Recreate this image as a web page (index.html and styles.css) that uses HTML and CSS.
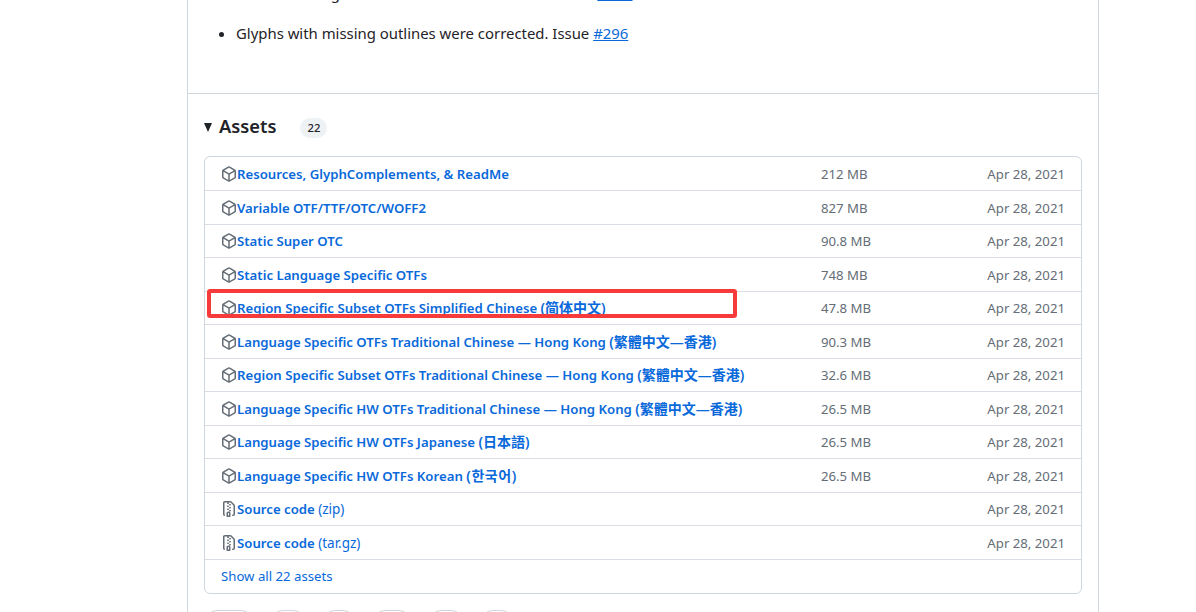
FILE: index.html
```html
<!DOCTYPE html>
<html lang="en">
<head>
<meta charset="utf-8">
<title>Release assets</title>
<link rel="stylesheet" href="styles.css">
</head>
<body>
<svg class="defs" width="0" height="0" aria-hidden="true">
  <symbol id="pkg" viewBox="0 0 16 16"><path d="m8.878.392 5.25 3.045c.54.314.872.89.872 1.514v6.098a1.75 1.75 0 0 1-.872 1.514l-5.25 3.045a1.75 1.75 0 0 1-1.756 0l-5.25-3.045A1.75 1.75 0 0 1 1 11.049V4.951c0-.624.332-1.201.872-1.514L7.122.392a1.75 1.75 0 0 1 1.756 0ZM7.875 1.69l-4.63 2.685L8 7.133l4.755-2.758-4.63-2.685a.248.248 0 0 0-.25 0ZM2.5 5.677v5.372c0 .09.047.171.125.216l4.625 2.683V8.432Zm6.25 8.271 4.625-2.683a.25.25 0 0 0 .125-.216V5.677L8.75 8.432Z"/></symbol>
  <symbol id="zip" viewBox="0 0 16 16"><path d="M3.5 1.75v11.5c0 .09.048.173.126.217a.75.75 0 0 1-.752 1.298A1.748 1.748 0 0 1 2 13.25V1.75C2 .784 2.784 0 3.75 0h5.586c.464 0 .909.185 1.237.513l2.914 2.914c.329.328.513.773.513 1.237v8.586A1.75 1.75 0 0 1 12.25 15h-.5a.75.75 0 0 1 0-1.5h.5a.25.25 0 0 0 .25-.25V4.664a.25.25 0 0 0-.073-.177L9.513 1.573a.25.25 0 0 0-.177-.073H7.25a.75.75 0 0 1 0 1.5h-.5a.75.75 0 0 1 0-1.5h-3a.25.25 0 0 0-.25.25Zm3.75 8.75h.5c.966 0 1.75.784 1.75 1.75v3a.75.75 0 0 1-.75.75h-2.5a.75.75 0 0 1-.75-.75v-3c0-.966.784-1.75 1.75-1.75ZM6 5.25a.75.75 0 0 1 .75-.75h.5a.75.75 0 0 1 0 1.5h-.5A.75.75 0 0 1 6 5.25Zm.75 2.25h.5a.75.75 0 0 1 0 1.5h-.5a.75.75 0 0 1 0-1.5ZM8 6.75A.75.75 0 0 1 8.75 6h.5a.75.75 0 0 1 0 1.5h-.5A.75.75 0 0 1 8 6.75ZM8.75 3h.5a.75.75 0 0 1 0 1.5h-.5a.75.75 0 0 1 0-1.5ZM8 9.75A.75.75 0 0 1 8.75 9h.5a.75.75 0 0 1 0 1.5h-.5A.75.75 0 0 1 8 9.75Zm-1 2.5v2.25h1v-2.25a.25.25 0 0 0-.25-.25h-.5a.25.25 0 0 0-.25.25Z"/></symbol>
</svg>
<main class="release">
  <section class="notes">
    <ul class="notes-list">
      <li>Small outline glitches were corrected in OTFs. Issue <a href="#">#284</a></li>
      <li>Glyphs with missing outlines were corrected. Issue <a href="#">#296</a></li>
    </ul>
  </section>
  <section class="assets">
    <div class="assets-head">
      <span class="caret"></span>
      <h2>Assets</h2>
      <span class="counter">22</span>
    </div>
    <div class="asset-box">
      <div class="row"><span class="name"><svg class="ico"><use href="#pkg"/></svg><a href="#">Resources, GlyphComplements, &amp; ReadMe</a></span><span class="size">212 MB</span><span class="date">Apr 28, 2021</span></div>
      <div class="row"><span class="name"><svg class="ico"><use href="#pkg"/></svg><a href="#">Variable OTF/TTF/OTC/WOFF2</a></span><span class="size">827 MB</span><span class="date">Apr 28, 2021</span></div>
      <div class="row"><span class="name"><svg class="ico"><use href="#pkg"/></svg><a href="#">Static Super OTC</a></span><span class="size">90.8 MB</span><span class="date">Apr 28, 2021</span></div>
      <div class="row"><span class="name"><svg class="ico"><use href="#pkg"/></svg><a href="#">Static Language Specific OTFs</a></span><span class="size">748 MB</span><span class="date">Apr 28, 2021</span></div>
      <div class="row"><span class="name"><svg class="ico"><use href="#pkg"/></svg><a href="#">Region Specific Subset OTFs Simplified Chinese <span class="cjk">(简体中文)</span></a></span><span class="size">47.8 MB</span><span class="date">Apr 28, 2021</span>
        <span class="highlight"></span></div>
      <div class="row"><span class="name"><svg class="ico"><use href="#pkg"/></svg><a href="#">Language Specific OTFs Traditional Chinese — Hong Kong <span class="cjk">(繁體中文—香港)</span></a></span><span class="size">90.3 MB</span><span class="date">Apr 28, 2021</span></div>
      <div class="row"><span class="name"><svg class="ico"><use href="#pkg"/></svg><a href="#">Region Specific Subset OTFs Traditional Chinese — Hong Kong <span class="cjk">(繁體中文—香港)</span></a></span><span class="size">32.6 MB</span><span class="date">Apr 28, 2021</span></div>
      <div class="row"><span class="name"><svg class="ico"><use href="#pkg"/></svg><a href="#">Language Specific HW OTFs Traditional Chinese — Hong Kong <span class="cjk">(繁體中文—香港)</span></a></span><span class="size">26.5 MB</span><span class="date">Apr 28, 2021</span></div>
      <div class="row"><span class="name"><svg class="ico"><use href="#pkg"/></svg><a href="#">Language Specific HW OTFs Japanese <span class="cjk">(日本語)</span></a></span><span class="size">26.5 MB</span><span class="date">Apr 28, 2021</span></div>
      <div class="row"><span class="name"><svg class="ico"><use href="#pkg"/></svg><a href="#">Language Specific HW OTFs Korean <span class="cjk kr">(한국어)</span></a></span><span class="size">26.5 MB</span><span class="date">Apr 28, 2021</span></div>
      <div class="row"><span class="name"><svg class="ico"><use href="#zip"/></svg><a href="#">Source code <span class="ext">(zip)</span></a></span><span class="size"></span><span class="date">Apr 28, 2021</span></div>
      <div class="row"><span class="name"><svg class="ico"><use href="#zip"/></svg><a href="#">Source code <span class="ext">(tar.gz)</span></a></span><span class="size"></span><span class="date">Apr 28, 2021</span></div>
      <div class="row row-more"><a href="#">Show all 22 assets</a></div>
    </div>
    <div class="reactions">
      <span class="pill p1"></span><span class="pill p2"></span><span class="pill p3"></span><span class="pill p4"></span><span class="pill p2"></span><span class="pill p3"></span>
    </div>
  </section>
</main>
</body>
</html>
```
FILE: styles.css
```css
html, body {
  margin: 0;
  height: 612px;
  overflow: hidden;
  background: #fff;
}
body {
  font-family: "Noto Sans", "Noto Sans CJK SC", sans-serif;
  color: #1f2328;
  font-size: 13.2px;
}
.defs { display: block; height: 0; }
.release {
  width: 912px;
  margin: -40px 0 0 187px;
  border-left: 1px solid #d0d7de;
  border-right: 1px solid #d0d7de;
  height: 700px;
  box-sizing: border-box;
}
.notes {
  height: 134px;
  padding-top: 21px;
  box-sizing: border-box;
  border-bottom: 1px solid #d0d7de;
}
.notes-list {
  margin: 0;
  padding: 0 0 0 48px;
  font-size: 14.9px;
  line-height: 24px;
}
.notes-list li { margin-top: 16px; white-space: nowrap; }
.notes-list li:first-child { margin-top: 0; }
.notes-list a { color: #0969da; text-decoration: underline; }
.assets { padding: 17px 16px 0; }
.assets-head {
  display: flex;
  align-items: center;
  height: 32px;
  margin-bottom: 13px;
}
.caret {
  width: 0;
  height: 0;
  border-left: 4.5px solid transparent;
  border-right: 4.5px solid transparent;
  border-top: 9px solid #1f2328;
  margin-right: 6px;
}
.assets-head h2 {
  margin: -2px 0 0 1px;
  font-size: 18.3px;
  font-weight: 600;
  line-height: 30px;
}
.counter {
  margin-left: 24px;
  margin-top: 1px;
  width: 27px;
  height: 20px;
  border-radius: 10px;
  background: #eff2f5;
  font-size: 11.3px;
  line-height: 20px;
  text-align: center;
  font-weight: 500;
}
.asset-box {
  border: 1px solid #d0d7de;
  border-radius: 6px;
}
.row {
  position: relative;
  display: flex;
  align-items: center;
  height: 33.5px;
  padding: 1px 16px 0;
  border-top: 1px solid #d8dee4;
  box-sizing: border-box;
}
.row:first-child { border-top: 0; height: 33px; }
.name {
  display: flex;
  align-items: center;
  flex: 0 0 600px;
  white-space: nowrap;
  font-weight: 600;
}
.name a, .row-more a { color: #0969da; text-decoration: none; }
.cjk { font-size: 14px; line-height: 1; }
.kr { letter-spacing: 0.6px; }
.ext { font-weight: 400; font-size: 13.5px; line-height: 1; }
.ico {
  width: 16px;
  height: 16px;
  fill: #656d76;
  flex: none;
}
.size { flex: 1; color: #656d76; }
.date { color: #656d76; white-space: nowrap; }
.row-more { height: 34px; padding-top: 0; padding-bottom: 1px; }
.highlight {
  position: absolute;
  left: 2px;
  top: -2.5px;
  width: 530px;
  height: 29px;
  border: 4px solid #f73b3b;
  border-radius: 3px;
  box-sizing: border-box;
}
.reactions {
  display: flex;
  gap: 16px;
  margin-top: 16px;
}
.pill {
  height: 26px;
  border: 1px solid #d0d7de;
  border-radius: 13px;
  box-sizing: border-box;
}
.p1 { width: 50px; }
.p2 { width: 36px; }
.p3 { width: 34px; }
.p4 { width: 40px; }
```
